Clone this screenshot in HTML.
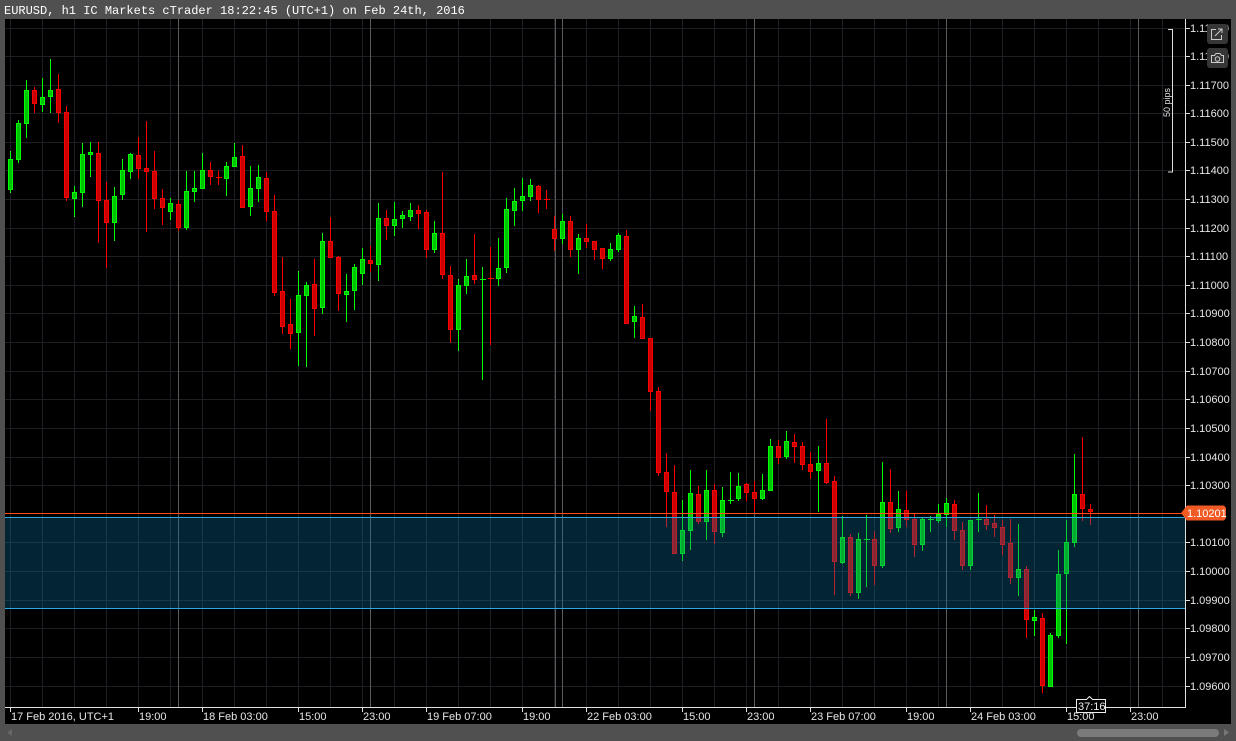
<!DOCTYPE html>
<html><head><meta charset="utf-8"><style>
html,body{margin:0;padding:0;background:#505050;width:1236px;height:741px;overflow:hidden}
svg{display:block}
text{font-family:"Liberation Sans",sans-serif}
</style></head><body>
<svg width="1236" height="741" viewBox="0 0 1236 741" xmlns="http://www.w3.org/2000/svg" shape-rendering="crispEdges">
<rect x="0" y="0" width="1236" height="741" fill="#505050"/>
<text x="4" y="14" fill="#fff" font-size="12" style="font-family:'Liberation Mono',monospace">EURUSD, h1 IC Markets cTrader 18:22:45 (UTC+1) on Feb 24th, 2016</text>
<rect x="5" y="19" width="1226" height="705" fill="#000"/>
<g stroke="#1e1e24" stroke-width="1">
<path d="M10.5 19V707M42.5 19V707M74.5 19V707M106.5 19V707M138.5 19V707M170.5 19V707M202.5 19V707M234.5 19V707M266.5 19V707M298.5 19V707M330.5 19V707M362.5 19V707M394.5 19V707M426.5 19V707M458.5 19V707M490.5 19V707M522.5 19V707M554.5 19V707M586.5 19V707M618.5 19V707M650.5 19V707M682.5 19V707M714.5 19V707M746.5 19V707M778.5 19V707M810.5 19V707M842.5 19V707M874.5 19V707M906.5 19V707M938.5 19V707M970.5 19V707M1002.5 19V707M1034.5 19V707M1066.5 19V707M1098.5 19V707M1130.5 19V707M1162.5 19V707"/>
<path d="M5 28.5H1185M5 56.5H1185M5 85.5H1185M5 113.5H1185M5 142.5H1185M5 170.5H1185M5 199.5H1185M5 228.5H1185M5 256.5H1185M5 285.5H1185M5 313.5H1185M5 342.5H1185M5 371.5H1185M5 399.5H1185M5 428.5H1185M5 457.5H1185M5 485.5H1185M5 542.5H1185M5 571.5H1185M5 600.5H1185M5 628.5H1185M5 657.5H1185M5 686.5H1185"/>
</g>
<g stroke="#5a5a5a"><path d="M178.5 19V707M370.5 19V707M555.5 19V707M562.5 19V707M754.5 19V707M946.5 19V707M1138.5 19V707"/></g>
<g stroke="#00ff00" stroke-width="1" fill="none">
<path d="M10.5 151V193M18.5 120V163M26.5 80V138M42.5 78V112M50.5 59V113M74.5 186V217M82.5 143V207M90.5 142V177M114.5 187V241M122.5 159V200M130.5 153V179M170.5 198V220M186.5 171V230M194.5 171V202M202.5 153V188M226.5 162V196M234.5 143V167M250.5 166V216M258.5 165V202M298.5 271V366M306.5 282V367M322.5 233V314M346.5 274V322M354.5 264V310M362.5 248V285M378.5 203V281M394.5 202V236M402.5 211V228M410.5 203V221M434.5 221V253M458.5 279V351M466.5 259V294M482.5 267V380M480 279.5h6M498.5 238V286M506.5 198V273M514.5 188V226M522.5 178V211M530.5 179V201M562.5 214V244M578.5 234V274M610.5 243V261M618.5 233V252M634.5 306V338M682.5 500V561M690.5 470V550M706.5 470V540M722.5 487V537M730.5 472V504M728 500.5h6M738.5 473V501M762.5 474V500M770.5 439V490M786.5 431V459M818.5 446V512M842.5 516V564M858.5 533V599M866.5 515V587M864 539.5h6M882.5 462V568M898.5 491V532M922.5 517V551M930.5 516V532M928 519.5h6M938.5 504V523M946.5 498V527M970.5 520V570M978.5 493V532M976 519.5h6M1018.5 524V596M1034.5 610V636M1050.5 633V686M1058.5 550V638M1066.5 520V644M1074.5 454V547"/>
</g>
<g stroke="#00ff00" fill="#00c400">
<rect x="8.5" y="159.5" width="4" height="30"/><rect x="16.5" y="123.5" width="4" height="36"/><rect x="24.5" y="90.5" width="4" height="33"/><rect x="40.5" y="97.5" width="4" height="7"/><rect x="48.5" y="90.5" width="4" height="6"/><rect x="72.5" y="192.5" width="4" height="6"/><rect x="80.5" y="154.5" width="4" height="38"/><rect x="88.5" y="152.5" width="4" height="2"/><rect x="112.5" y="196.5" width="4" height="26"/><rect x="120.5" y="170.5" width="4" height="24"/><rect x="128.5" y="154.5" width="4" height="17"/><rect x="168.5" y="203.5" width="4" height="8"/><rect x="184.5" y="191.5" width="4" height="36"/><rect x="192.5" y="188.5" width="4" height="3"/><rect x="200.5" y="170.5" width="4" height="18"/><rect x="224.5" y="166.5" width="4" height="12"/><rect x="232.5" y="157.5" width="4" height="9"/><rect x="248.5" y="188.5" width="4" height="18"/><rect x="256.5" y="177.5" width="4" height="11"/><rect x="296.5" y="295.5" width="4" height="37"/><rect x="304.5" y="285.5" width="4" height="10"/><rect x="320.5" y="241.5" width="4" height="66"/><rect x="344.5" y="291.5" width="4" height="3"/><rect x="352.5" y="267.5" width="4" height="23"/><rect x="360.5" y="259.5" width="4" height="14"/><rect x="376.5" y="218.5" width="4" height="46"/><rect x="392.5" y="219.5" width="4" height="6"/><rect x="400.5" y="215.5" width="4" height="3"/><rect x="408.5" y="210.5" width="4" height="6"/><rect x="432.5" y="233.5" width="4" height="16"/><rect x="456.5" y="285.5" width="4" height="44"/><rect x="464.5" y="276.5" width="4" height="9"/><rect x="496.5" y="268.5" width="4" height="10"/><rect x="504.5" y="209.5" width="4" height="58"/><rect x="512.5" y="201.5" width="4" height="9"/><rect x="520.5" y="196.5" width="4" height="4"/><rect x="528.5" y="185.5" width="4" height="11"/><rect x="560.5" y="221.5" width="4" height="17"/><rect x="576.5" y="238.5" width="4" height="11"/><rect x="608.5" y="249.5" width="4" height="9"/><rect x="616.5" y="235.5" width="4" height="14"/><rect x="632.5" y="316.5" width="4" height="5"/><rect x="680.5" y="530.5" width="4" height="23"/><rect x="688.5" y="493.5" width="4" height="37"/><rect x="704.5" y="490.5" width="4" height="31"/><rect x="720.5" y="500.5" width="4" height="32"/><rect x="736.5" y="486.5" width="4" height="12"/><rect x="760.5" y="490.5" width="4" height="8"/><rect x="768.5" y="446.5" width="4" height="44"/><rect x="784.5" y="441.5" width="4" height="15"/><rect x="816.5" y="463.5" width="4" height="7"/><rect x="840.5" y="537.5" width="4" height="25"/><rect x="856.5" y="539.5" width="4" height="53"/><rect x="880.5" y="502.5" width="4" height="63"/><rect x="896.5" y="509.5" width="4" height="18"/><rect x="920.5" y="519.5" width="4" height="25"/><rect x="936.5" y="514.5" width="4" height="6"/><rect x="944.5" y="503.5" width="4" height="11"/><rect x="968.5" y="520.5" width="4" height="45"/><rect x="1016.5" y="569.5" width="4" height="8"/><rect x="1032.5" y="617.5" width="4" height="3"/><rect x="1048.5" y="635.5" width="4" height="51"/><rect x="1056.5" y="574.5" width="4" height="61"/><rect x="1064.5" y="542.5" width="4" height="31"/><rect x="1072.5" y="494.5" width="4" height="48"/>
</g>
<g stroke="#ff0000" fill="none">
<path d="M34.5 87V113M58.5 74V123M66.5 106V201M98.5 142V243M106.5 182V268M138.5 137V179M146.5 121V232M154.5 151V209M162.5 189V225M178.5 200V231M210.5 162V185M218.5 171V185M216 177.5h6M242.5 145V207M266.5 172V221M274.5 195V296M282.5 257V334M290.5 299V349M314.5 259V336M330.5 217V257M338.5 256V311M370.5 246V272M386.5 210V240M418.5 205V229M426.5 210V258M442.5 172V279M450.5 266V343M474.5 234V284M490.5 247V345M488 278.5h6M538.5 185V213M546.5 190V209M544 199.5h6M554.5 216V251M570.5 216V257M586.5 224V248M594.5 241V260M602.5 248V269M626.5 230V323M642.5 304V339M650.5 338V411M658.5 387V476M666.5 453V527M674.5 465V553M698.5 486V524M714.5 484V544M746.5 483V501M754.5 481V512M778.5 440V464M794.5 434V463M802.5 442V470M810.5 452V479M826.5 419V484M834.5 476V595M850.5 534V596M874.5 531V585M890.5 469V533M906.5 491V527M914.5 514V557M954.5 500V540M962.5 522V570M986.5 505V530M994.5 515V537M1002.5 520V555M1010.5 519V584M1026.5 566V638M1042.5 613V693M1082.5 437V521M1090.5 504V525"/>
</g>
<g stroke="#ff0000" fill="#c80000">
<rect x="32.5" y="90.5" width="4" height="13"/><rect x="56.5" y="89.5" width="4" height="23"/><rect x="64.5" y="112.5" width="4" height="85"/><rect x="96.5" y="153.5" width="4" height="47"/><rect x="104.5" y="200.5" width="4" height="22"/><rect x="136.5" y="155.5" width="4" height="13"/><rect x="144.5" y="168.5" width="4" height="3"/><rect x="152.5" y="171.5" width="4" height="27"/><rect x="160.5" y="198.5" width="4" height="9"/><rect x="176.5" y="204.5" width="4" height="23"/><rect x="208.5" y="170.5" width="4" height="6"/><rect x="240.5" y="156.5" width="4" height="51"/><rect x="264.5" y="178.5" width="4" height="33"/><rect x="272.5" y="211.5" width="4" height="81"/><rect x="280.5" y="291.5" width="4" height="35"/><rect x="288.5" y="324.5" width="4" height="9"/><rect x="312.5" y="284.5" width="4" height="24"/><rect x="328.5" y="241.5" width="4" height="16"/><rect x="336.5" y="257.5" width="4" height="36"/><rect x="368.5" y="260.5" width="4" height="3"/><rect x="384.5" y="218.5" width="4" height="7"/><rect x="416.5" y="210.5" width="4" height="3"/><rect x="424.5" y="212.5" width="4" height="37"/><rect x="440.5" y="233.5" width="4" height="41"/><rect x="448.5" y="275.5" width="4" height="54"/><rect x="472.5" y="275.5" width="4" height="4"/><rect x="536.5" y="186.5" width="4" height="13"/><rect x="552.5" y="229.5" width="4" height="9"/><rect x="568.5" y="221.5" width="4" height="28"/><rect x="584.5" y="238.5" width="4" height="3"/><rect x="592.5" y="241.5" width="4" height="8"/><rect x="600.5" y="248.5" width="4" height="10"/><rect x="624.5" y="236.5" width="4" height="87"/><rect x="640.5" y="317.5" width="4" height="21"/><rect x="648.5" y="338.5" width="4" height="53"/><rect x="656.5" y="391.5" width="4" height="81"/><rect x="664.5" y="472.5" width="4" height="19"/><rect x="672.5" y="492.5" width="4" height="61"/><rect x="696.5" y="494.5" width="4" height="27"/><rect x="712.5" y="490.5" width="4" height="41"/><rect x="744.5" y="484.5" width="4" height="8"/><rect x="752.5" y="492.5" width="4" height="6"/><rect x="776.5" y="446.5" width="4" height="11"/><rect x="792.5" y="442.5" width="4" height="4"/><rect x="800.5" y="446.5" width="4" height="18"/><rect x="808.5" y="464.5" width="4" height="7"/><rect x="824.5" y="463.5" width="4" height="19"/><rect x="832.5" y="481.5" width="4" height="80"/><rect x="848.5" y="537.5" width="4" height="55"/><rect x="872.5" y="539.5" width="4" height="26"/><rect x="888.5" y="502.5" width="4" height="26"/><rect x="904.5" y="510.5" width="4" height="9"/><rect x="912.5" y="519.5" width="4" height="25"/><rect x="952.5" y="504.5" width="4" height="26"/><rect x="960.5" y="530.5" width="4" height="35"/><rect x="984.5" y="519.5" width="4" height="5"/><rect x="992.5" y="523.5" width="4" height="4"/><rect x="1000.5" y="527.5" width="4" height="17"/><rect x="1008.5" y="543.5" width="4" height="34"/><rect x="1024.5" y="569.5" width="4" height="50"/><rect x="1040.5" y="618.5" width="4" height="67"/><rect x="1080.5" y="494.5" width="4" height="14"/><rect x="1088.5" y="509.5" width="4" height="2"/>
</g>
<rect x="5" y="517" width="1180" height="92" fill="rgba(10,115,160,0.32)"/>
<path d="M5 517.5H1185M5 608.5H1185" stroke="#2aa8e0"/>
<rect x="5" y="513" width="1180" height="1" fill="#ff4a1a"/>
<path d="M1185.5 19V707.5M5 707.5H1186" stroke="#e0e0e0"/>
<g stroke="#e0e0e0"><path d="M1186 28.5h4M1186 56.5h4M1186 85.5h4M1186 113.5h4M1186 142.5h4M1186 170.5h4M1186 199.5h4M1186 228.5h4M1186 256.5h4M1186 285.5h4M1186 313.5h4M1186 342.5h4M1186 371.5h4M1186 399.5h4M1186 428.5h4M1186 457.5h4M1186 485.5h4M1186 542.5h4M1186 571.5h4M1186 600.5h4M1186 628.5h4M1186 657.5h4M1186 686.5h4"/>
<path d="M10.5 707v5M138.5 707v5M202.5 707v5M298.5 707v5M362.5 707v5M426.5 707v5M522.5 707v5M586.5 707v5M682.5 707v5M746.5 707v5M810.5 707v5M906.5 707v5M970.5 707v5M1066.5 707v5M1130.5 707v5"/></g>
<g fill="#e6e6e6" font-size="11">
<text x="1190" y="32">1.11900</text><text x="1190" y="60">1.11800</text><text x="1190" y="89">1.11700</text><text x="1190" y="117">1.11600</text><text x="1190" y="146">1.11500</text><text x="1190" y="174">1.11400</text><text x="1190" y="203">1.11300</text><text x="1190" y="232">1.11200</text><text x="1190" y="260">1.11100</text><text x="1190" y="289">1.11000</text><text x="1190" y="317">1.10900</text><text x="1190" y="346">1.10800</text><text x="1190" y="375">1.10700</text><text x="1190" y="403">1.10600</text><text x="1190" y="432">1.10500</text><text x="1190" y="461">1.10400</text><text x="1190" y="489">1.10300</text><text x="1190" y="546">1.10100</text><text x="1190" y="575">1.10000</text><text x="1190" y="604">1.09900</text><text x="1190" y="632">1.09800</text><text x="1190" y="661">1.09700</text><text x="1190" y="690">1.09600</text>
<text x="11" y="720">17 Feb 2016, UTC+1</text><text x="139" y="720">19:00</text><text x="203" y="720">18 Feb 03:00</text><text x="299" y="720">15:00</text><text x="363" y="720">23:00</text><text x="427" y="720">19 Feb 07:00</text><text x="523" y="720">19:00</text><text x="587" y="720">22 Feb 03:00</text><text x="683" y="720">15:00</text><text x="747" y="720">23:00</text><text x="811" y="720">23 Feb 07:00</text><text x="907" y="720">19:00</text><text x="971" y="720">24 Feb 03:00</text><text x="1067" y="720">15:00</text><text x="1131" y="720">23:00</text>
</g>
<path d="M1181 513 L1187 505.5 H1224 L1226 508 V518 L1224 520.5 H1187 Z" fill="#f15a24" shape-rendering="auto"/>
<text x="1187" y="517" fill="#fff" font-size="11">1.10201</text>
<path d="M1168 29.5h4.5V172h-4.5" stroke="#ddd" fill="none"/>
<text x="0" y="0" fill="#ddd" font-size="9" transform="translate(1170 117) rotate(-90)">50 pips</text>
<rect x="1207" y="24" width="21" height="20" rx="3" fill="#363636"/>
<rect x="1207" y="48" width="21" height="20" rx="3" fill="#363636"/>
<g stroke="#ccc" fill="none" shape-rendering="auto">
<path d="M1216 29.5h-4.5v10h10v-4.5"/><path d="M1215 36l7-7M1218 29h4v4"/>
<path d="M1211.5 55.5h3l1.5-2h4l1.5 2h2v7h-12z"/><circle cx="1217.5" cy="59" r="2.3"/>
</g>
<path d="M1076.5 699.5h10l3-3 3 3h13v13h-29z" fill="#000" stroke="#eee" shape-rendering="auto"/>
<text x="1078" y="710" fill="#eee" font-size="11">37:16</text>
<rect x="1077" y="729" width="142" height="8" rx="4" fill="#7a7a7a" shape-rendering="auto"/>
<path d="M1224 729v7l5-3.5z" fill="#777" shape-rendering="auto"/>
<path d="M12 729v7l-5-3.5z" fill="#666" shape-rendering="auto"/>
</svg>
</body></html>
